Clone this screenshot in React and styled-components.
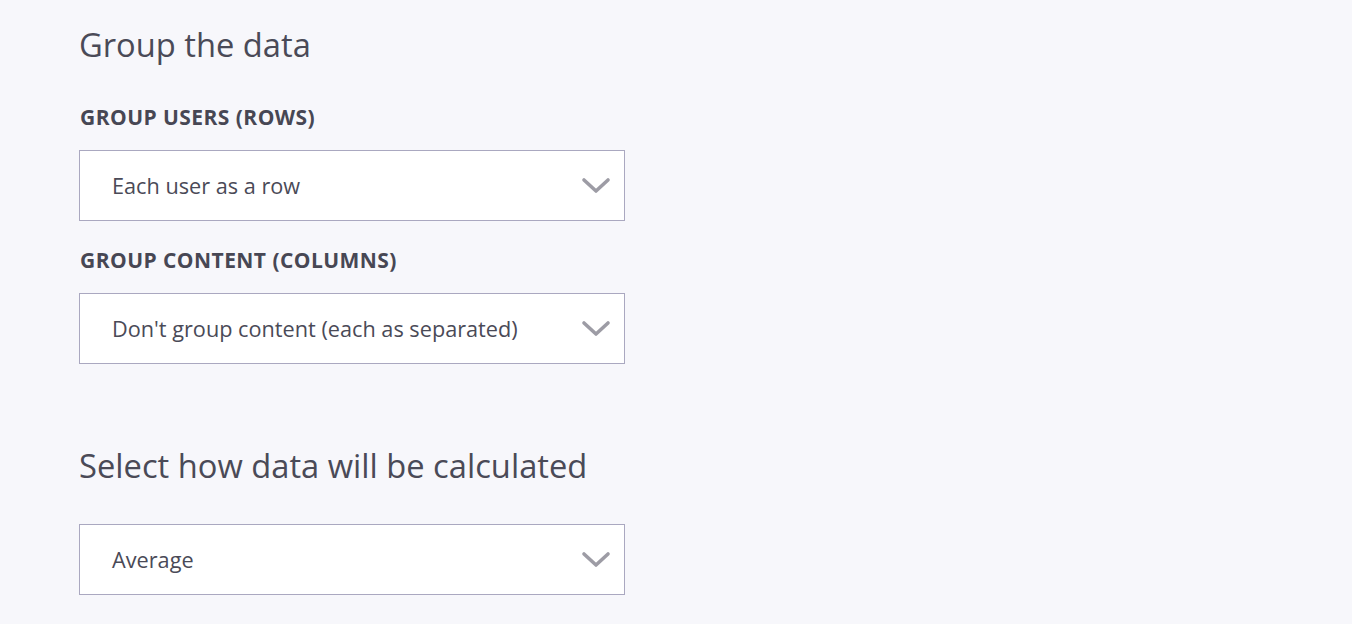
import React from 'react';
import styled, { createGlobalStyle } from 'styled-components';

const GlobalStyle = createGlobalStyle`
  body {
    margin: 0;
    background-color: #f7f7fb;
    font-family: 'Open Sans', 'Noto Sans', sans-serif;
    color: #4a4a57;
  }
`;

const Page = styled.div`
  padding: 23px 0 0 79px;
  width: 546px;
`;

const Section = styled.section`
  display: flex;
  flex-direction: column;
  margin-top: ${(p) => p.top || 0}px;
`;

const Heading = styled.h2`
  margin: 0 0 ${(p) => p.gap}px 0;
  font-size: 32.7px;
  line-height: 44px;
  font-weight: 400;
  color: #4a4a57;
`;

const Label = styled.div`
  margin: 0 0 19px 1px;
  font-size: 21px;
  line-height: 28px;
  font-weight: 700;
  letter-spacing: 0.45px;
  color: #474754;
`;

const Field = styled.div`
  margin-bottom: ${(p) => p.gap || 0}px;
`;

const SelectBox = styled.div`
  box-sizing: border-box;
  height: 71px;
  display: flex;
  align-items: center;
  justify-content: space-between;
  padding: 0 13px 0 32px;
  background: #ffffff;
  border: 1px solid #aaa8c0;
  font-size: 21.7px;
  color: #4a4a57;
  cursor: pointer;
`;

const Chevron = () => (
  <svg width="30" height="18" viewBox="0 0 30 18" fill="none">
    <path d="M3 3 L15 14 L27 3" stroke="#9d9ca5" strokeWidth="3.6" strokeLinecap="round" strokeLinejoin="round" />
  </svg>
);

function Select({ value }) {
  return (
    <SelectBox>
      <span>{value}</span>
      <Chevron />
    </SelectBox>
  );
}

export default function App() {
  return (
    <>
      <GlobalStyle />
      <Page>
        <Section>
          <Heading gap={36}>Group the data</Heading>
          <Field gap={25}>
            <Label>GROUP USERS (ROWS)</Label>
            <Select value="Each user as a row" />
          </Field>
          <Field>
            <Label>GROUP CONTENT (COLUMNS)</Label>
            <Select value="Don't group content (each as separated)" />
          </Field>
        </Section>
        <Section top={80}>
          <Heading gap={36}>Select how data will be calculated</Heading>
          <Select value="Average" />
        </Section>
      </Page>
    </>
  );
}
